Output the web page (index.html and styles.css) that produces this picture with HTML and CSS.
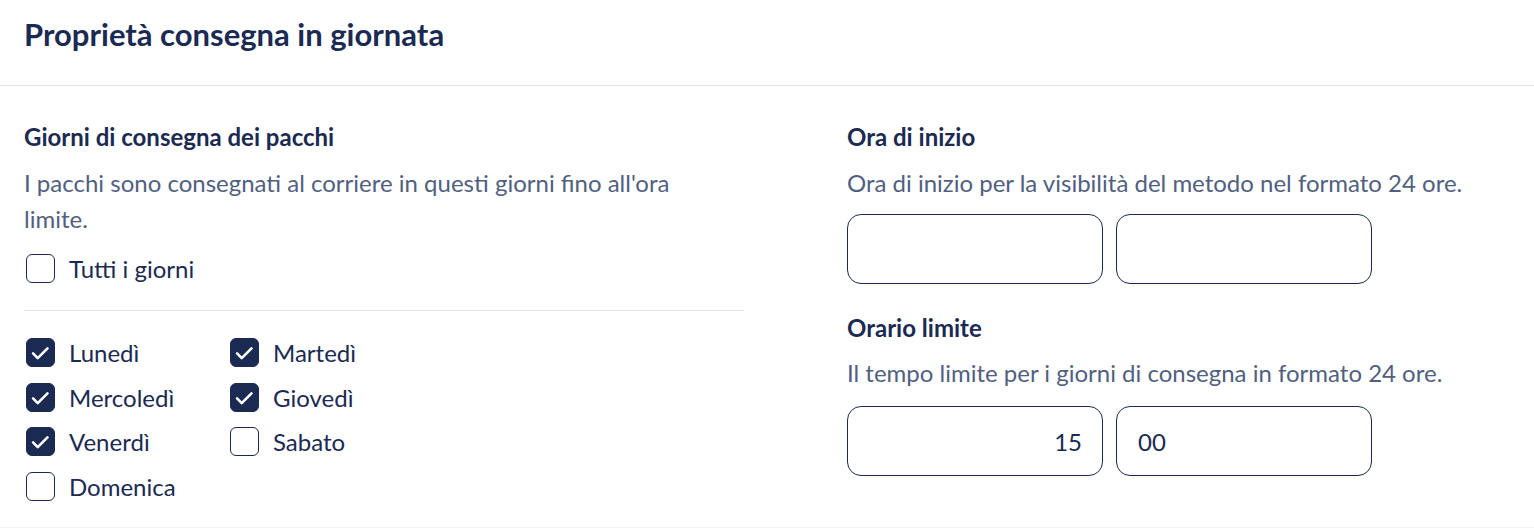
FILE: index.html
```html
<!DOCTYPE html>
<html lang="it">
<head>
<meta charset="utf-8">
<title>Proprietà consegna in giornata</title>
<link rel="stylesheet" href="styles.css">
</head>
<body>
<div class="card">
  <header class="card-header">
    <h2 class="card-title">Proprietà consegna in giornata</h2>
  </header>
  <div class="card-body">
    <section class="col-left">
      <h3 class="field-title">Giorni di consegna dei pacchi</h3>
      <p class="field-desc">I pacchi sono consegnati al corriere in questi giorni fino all'ora limite.</p>
      <label class="check all">
        <span class="box"></span>
        <span class="check-label">Tutti i giorni</span>
      </label>
      <div class="divider"></div>
      <div class="days">
        <label class="check"><span class="box checked"><svg viewBox="0 0 29 29"><path d="M6.5 15.5l5 5 10.5-10.5"/></svg></span><span class="check-label">Lunedì</span></label>
        <label class="check"><span class="box checked"><svg viewBox="0 0 29 29"><path d="M6.5 15.5l5 5 10.5-10.5"/></svg></span><span class="check-label">Martedì</span></label>
        <label class="check"><span class="box checked"><svg viewBox="0 0 29 29"><path d="M6.5 15.5l5 5 10.5-10.5"/></svg></span><span class="check-label">Mercoledì</span></label>
        <label class="check"><span class="box checked"><svg viewBox="0 0 29 29"><path d="M6.5 15.5l5 5 10.5-10.5"/></svg></span><span class="check-label">Giovedì</span></label>
        <label class="check"><span class="box checked"><svg viewBox="0 0 29 29"><path d="M6.5 15.5l5 5 10.5-10.5"/></svg></span><span class="check-label">Venerdì</span></label>
        <label class="check"><span class="box"></span><span class="check-label">Sabato</span></label>
        <label class="check"><span class="box"></span><span class="check-label">Domenica</span></label>
      </div>
    </section>
    <section class="col-right">
      <h3 class="field-title">Ora di inizio</h3>
      <p class="field-desc">Ora di inizio per la visibilità del metodo nel formato 24 ore.</p>
      <div class="time-row">
        <div class="time-input hours"></div>
        <div class="time-input minutes"></div>
      </div>
      <h3 class="field-title second">Orario limite</h3>
      <p class="field-desc second-desc">Il tempo limite per i giorni di consegna in formato 24 ore.</p>
      <div class="time-row second-row">
        <div class="time-input hours">15</div>
        <div class="time-input minutes">00</div>
      </div>
    </section>
  </div>
</div>
</body>
</html>
```

FILE: styles.css
```css
* { box-sizing: border-box; }
html, body {
  margin: 0;
  padding: 0;
  background: #ffffff;
}
body {
  font-family: "Lato", "Noto Sans", sans-serif;
  color: #1b2a52;
}
.card {
  width: 1534px;
  height: 528px;
  border-bottom: 1px solid #f3f3f3;
}
.card-header {
  height: 86px;
  padding: 15px 24px 0;
  border-bottom: 1px solid #e6e6e6;
}
.card-title {
  margin: 0;
  font-size: 31px;
  line-height: 38px;
  font-weight: 700;
  color: #1b2a52;
}
.card-body {
  display: grid;
  grid-template-columns: 720px 1fr;
  column-gap: 103px;
  padding: 36px 24px 0;
}
.field-title {
  margin: 0;
  font-size: 24px;
  line-height: 30px;
  font-weight: 700;
  color: #1b2a52;
}
.field-desc {
  margin: 13px 0 0;
  font-size: 24px;
  line-height: 36px;
  color: #51607f;
  max-width: 680px;
}
.check {
  display: flex;
  align-items: center;
  gap: 14px;
  height: 29px;
  margin-left: 2px;
}
.check.all { margin-top: 17px; }
.box {
  width: 29px;
  height: 29px;
  flex: none;
  border: 1px solid #1b2a52;
  border-radius: 6px;
  background: #fff;
  display: flex;
}
.box.checked { background: #1b2a52; }
.box svg {
  width: 100%;
  height: 100%;
  fill: none;
  stroke: #ffffff;
  stroke-width: 2.8;
  stroke-linecap: round;
  stroke-linejoin: round;
}
.check-label {
  font-size: 24px;
  color: #1b2a52;
}
.divider {
  height: 1px;
  background: #e6e6e6;
  margin-top: 27px;
}
.days {
  display: grid;
  grid-template-columns: 204px 204px;
  row-gap: 15.67px;
  margin-top: 27px;
}
.time-row {
  display: flex;
  gap: 13px;
  margin-top: 13px;
}
.time-input {
  width: 256px;
  height: 70px;
  border: 1px solid #1b2a52;
  border-radius: 14px;
  font-size: 24px;
  color: #1b2a52;
  display: flex;
  align-items: center;
  padding: 0 21px;
}
.time-input.hours { justify-content: flex-end; padding-right: 20px; }
.field-title.second { margin-top: 29px; }
.field-desc.second-desc { margin-top: 12px; }
.time-row.second-row { margin-top: 15px; }
```
